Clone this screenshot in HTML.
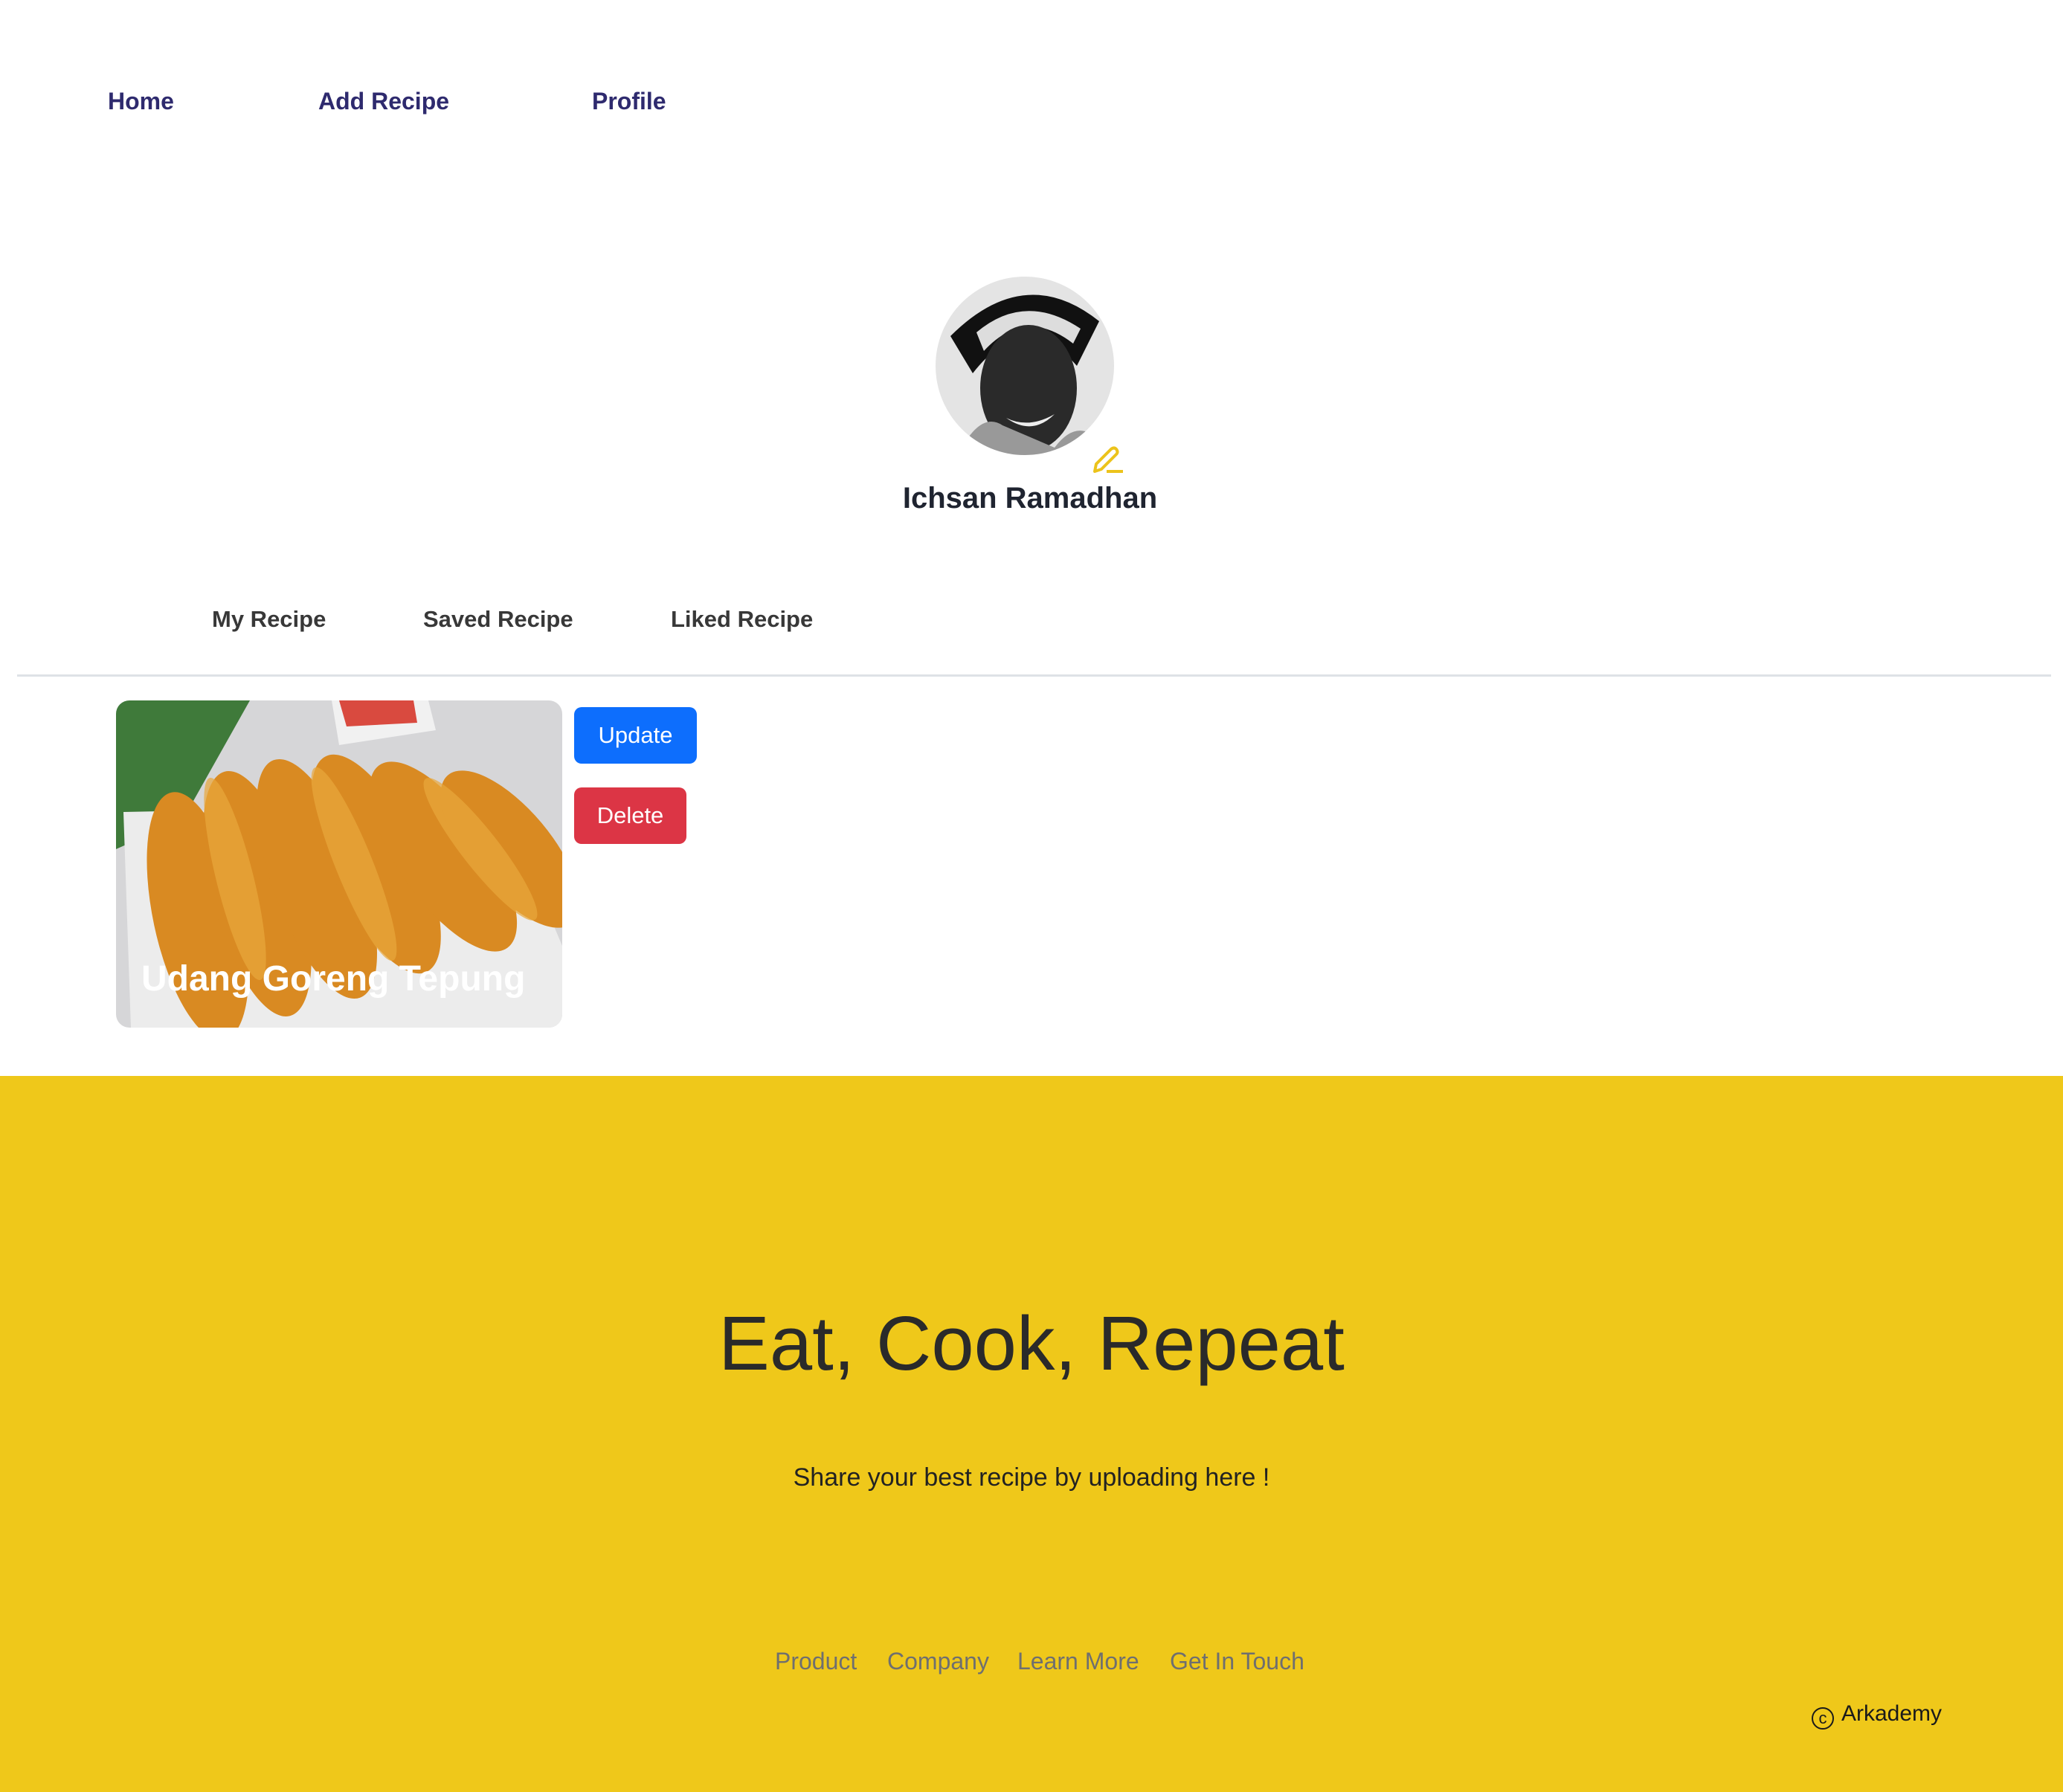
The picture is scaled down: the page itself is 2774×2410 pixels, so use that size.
<!DOCTYPE html>
<html><head><meta charset="utf-8"><style>
body{margin:0;width:2774px;height:2410px;position:relative;background:#fff;font-family:"Liberation Sans",sans-serif;overflow:hidden}
.a{position:absolute;white-space:nowrap}
.nav{font-size:32px;font-weight:bold;color:#2e2a6e;top:118px}
.tab{font-size:31px;font-weight:bold;color:#383838;top:815px}
.btn{position:absolute;left:772px;height:76px;border-radius:10px;color:#fff;font-size:31px;line-height:76px;text-align:center}
.lk{font-size:32px;color:#6f6f6f;top:2216px}
</style></head><body>
<div class="a nav" style="left:145px">Home</div>
<div class="a nav" style="left:428px">Add Recipe</div>
<div class="a nav" style="left:796px">Profile</div>

<svg class="a" style="left:1258px;top:372px" width="240" height="240" viewBox="0 0 240 240">
<defs><clipPath id="c"><circle cx="120" cy="120" r="120"/></clipPath></defs>
<g clip-path="url(#c)">
<rect width="240" height="240" fill="#e4e4e4"/>
<path d="M20 80 Q120 -20 220 60 L190 120 Q120 40 50 130Z" fill="#111"/>
<path d="M55 75 Q120 20 195 70 L185 90 Q120 40 65 100Z" fill="#ddd"/>
<ellipse cx="125" cy="150" rx="65" ry="85" fill="#2a2a2a"/>
<path d="M30 240 Q60 180 90 200 L160 230 Q190 190 220 220 L220 240Z" fill="#999"/>
<path d="M95 190 Q125 205 160 185 Q130 215 95 190Z" fill="#eee"/>
</g></svg>
<svg class="a" style="left:1468px;top:600px" width="46" height="40" viewBox="0 0 46 40"><path d="M4 34 L6 24 L26 4 Q30 1 33 4 Q36 8 33 11 L13 31 Z" fill="none" stroke="#ecc31b" stroke-width="4" stroke-linejoin="round"/><path d="M20 34 H42" stroke="#ecc31b" stroke-width="4"/></svg>
<div class="a" style="left:0;width:2770px;text-align:center;top:648px;font-size:40px;font-weight:bold;color:#1f2430">Ichsan Ramadhan</div>

<div class="a tab" style="left:285px">My Recipe</div>
<div class="a tab" style="left:569px">Saved Recipe</div>
<div class="a tab" style="left:902px">Liked Recipe</div>
<div class="a" style="left:23px;width:2735px;top:907px;height:3px;background:#dee2e6"></div>

<svg class="a" style="left:156px;top:942px;border-radius:18px" width="600" height="440" viewBox="0 0 600 440">
<rect width="600" height="440" fill="#d6d6d8"/>
<path d="M0 0 L180 0 L90 160 L0 200Z" fill="#3f7a3a"/>
<path d="M290 0 L420 0 L430 40 L300 60Z" fill="#f1f1f1"/><path d="M300 0 L400 0 L405 30 L310 35Z" fill="#d94a3f"/>
<path d="M10 150 L520 140 L600 330 L600 440 L20 440Z" fill="#ececec"/>
<g fill="#d98a22">
<ellipse cx="110" cy="290" rx="60" ry="170" transform="rotate(-12 110 290)"/>
<ellipse cx="190" cy="260" rx="60" ry="170" transform="rotate(-15 190 260)"/>
<ellipse cx="270" cy="240" rx="60" ry="170" transform="rotate(-20 270 240)"/>
<ellipse cx="350" cy="220" rx="60" ry="160" transform="rotate(-25 350 220)"/>
<ellipse cx="440" cy="210" rx="60" ry="150" transform="rotate(-35 440 210)"/>
<ellipse cx="530" cy="200" rx="55" ry="130" transform="rotate(-40 530 200)"/>
</g>
<g fill="#e9a83c" opacity=".7"><ellipse cx="160" cy="240" rx="25" ry="140" transform="rotate(-14 160 240)"/><ellipse cx="320" cy="220" rx="25" ry="140" transform="rotate(-22 320 220)"/><ellipse cx="490" cy="200" rx="25" ry="120" transform="rotate(-38 490 200)"/></g>
<text x="34" y="390" font-family="Liberation Sans" font-weight="bold" font-size="48" fill="#fff">Udang Goreng Tepung</text>
</svg>
<div class="btn" style="top:951px;width:165px;background:#0d6efd">Update</div>
<div class="btn" style="top:1059px;width:151px;background:#dc3545">Delete</div>

<div class="a" style="left:0;top:1447px;width:2774px;height:963px;background:#efc81a"></div>
<div class="a" style="left:0;width:2774px;text-align:center;top:1748px;font-size:103px;font-weight:300;color:#2a2a2a">Eat, Cook, Repeat</div>
<div class="a" style="left:0;width:2774px;text-align:center;top:1968px;font-size:34px;color:#222">Share your best recipe by uploading here !</div>
<div class="a lk" style="left:1042px">Product</div>
<div class="a lk" style="left:1193px">Company</div>
<div class="a lk" style="left:1368px">Learn More</div>
<div class="a lk" style="left:1573px">Get In Touch</div>
<div class="a" style="left:2436px;top:2288px;font-size:30px;color:#1a1a1a"><span style="display:inline-block;width:30px;height:30px;border:2.5px solid #1a1a1a;border-radius:50%;font-size:22px;line-height:26px;text-align:center;box-sizing:border-box;vertical-align:-4px;margin-right:10px">c</span>Arkademy</div>
</body></html>
